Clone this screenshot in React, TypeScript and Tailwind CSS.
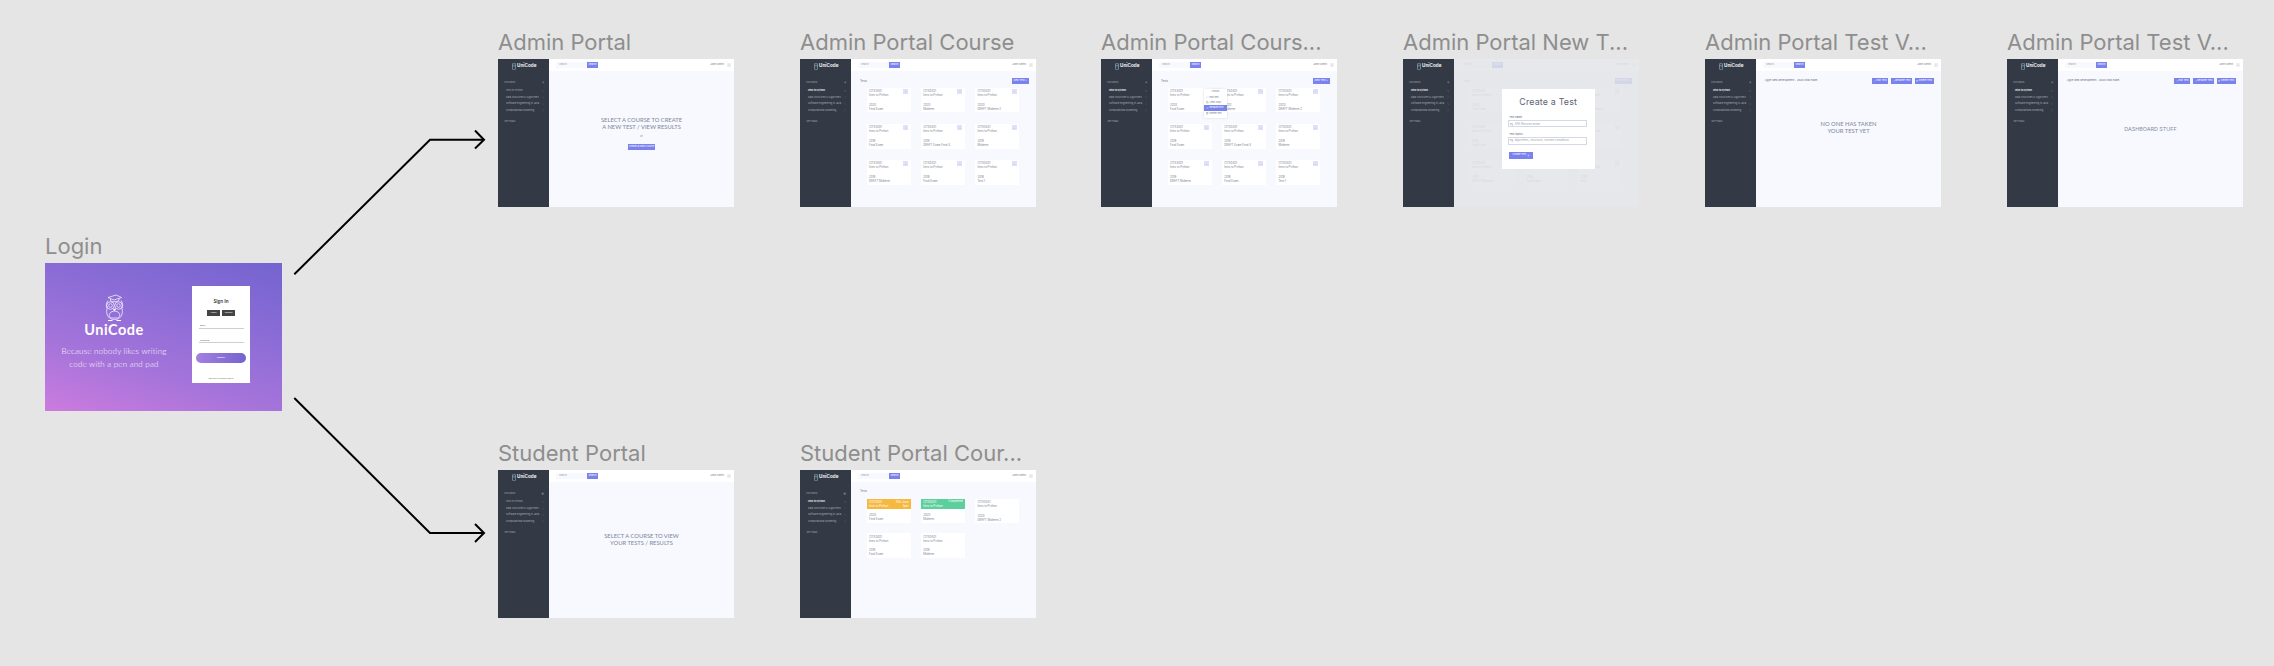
import type { ReactNode } from "react";
import { ChevronRight, Plus, Menu, Check, Copy, Pencil, Trash2 } from "lucide-react";

const courses = [
  "Intro to Python",
  "Data Structures & Algorithms",
  "Software Engineering in Java",
  "Computational Modelling",
];

const tests = [
  ["2020", "Final Exam"],
  ["2020", "Midterm"],
  ["2020", "DRAFT Midterm 2"],
  ["2019", "Final Exam"],
  ["2019", "DRAFT Exam Final 4"],
  ["2019", "Midterm"],
  ["2019", "DRAFT Midterm"],
  ["2018", "Final Exam"],
  ["2018", "Test 1"],
];

function Board({ label, pos, children }: { label: string; pos: string; children: ReactNode }) {
  return (
    <section className={`absolute ${pos}`}>
      <h2 className="h-[29px] whitespace-nowrap text-[22px] leading-[24px] font-normal text-[#8e8e8e]">
        {label}
      </h2>
      {children}
    </section>
  );
}

function LogoMark() {
  return (
    <svg viewBox="0 0 8 14" className="h-[7px] w-[4px]" fill="none" stroke="#a6cbd8" strokeWidth="1">
      <rect x="1" y="0.7" width="6" height="12.6" rx="1.5" />
      <path d="M1 4.5h6M3 7.5h2" />
    </svg>
  );
}

function Sidebar({ active, bigPlus }: { active?: number; bigPlus?: boolean }) {
  return (
    <aside className="flex h-full w-[51px] shrink-0 flex-col bg-[#343a45]">
      <div className="flex h-[14px] items-center justify-center gap-[1.5px] pl-[1px]">
        <LogoMark />
        <span className="text-[4.6px] leading-none font-bold text-[#eef0f3]">UniCode</span>
      </div>
      <div className="mt-[7.5px] flex h-[4px] items-center justify-between pr-[4.5px] pl-[6.3px] text-[2.2px] tracking-[0.1px] text-[#a9aeb8]">
        <span>COURSES</span>
        <Plus size={bigPlus ? 3.5 : 2.5} strokeWidth={3} />
      </div>
      <ul className="mt-[3px] flex flex-col">
        {courses.map((c, i) => (
          <li
            key={c}
            className={`flex h-[6.55px] items-center justify-between pr-[4.5px] pl-[8px] text-[2.4px] whitespace-nowrap ${
              active === i ? "font-semibold text-white" : "text-[#a4a9b3]"
            }`}
          >
            <span>{c}</span>
            <ChevronRight size={2.5} strokeWidth={2} />
          </li>
        ))}
      </ul>
      <div className="mt-[6.5px] pl-[6.5px] text-[2.2px] text-[#a9aeb8]">SETTINGS</div>
    </aside>
  );
}

function TopBar() {
  return (
    <header className="flex h-[12px] shrink-0 items-center bg-white pr-[3px] pl-[7px]">
      <div className="flex h-[6px] w-[31px] items-center rounded-l-[1px] bg-[#f8f9fe] pl-[3px] text-[2.4px] text-[#9a9fae]">
        Search...
      </div>
      <div className="flex h-[6px] w-[11px] items-center justify-center bg-[#7a82ee] text-[2.4px] text-white">
        Search
      </div>
      <div className="ml-auto flex items-center gap-[3px] text-[2.6px] text-[#6f7585]">
        <span>John Smith</span>
        <Menu size={4} strokeWidth={1.2} />
      </div>
    </header>
  );
}

function Shell({
  active,
  bigPlus,
  children,
}: {
  active?: number;
  bigPlus?: boolean;
  children: ReactNode;
}) {
  return (
    <div className="flex h-[148px] w-[236px] overflow-hidden bg-[#f8f9fe] font-['Inter',sans-serif]">
      <Sidebar active={active} bigPlus={bigPlus} />
      <div className="relative flex min-w-0 flex-1 flex-col">
        <TopBar />
        {children}
      </div>
    </div>
  );
}

function SmallButton({ children, className = "" }: { children: ReactNode; className?: string }) {
  return (
    <span
      className={`flex h-[5.4px] items-center justify-center gap-[0.7px] bg-[#7a82ee] text-[2.5px] whitespace-nowrap text-white ${className}`}
    >
      {children}
    </span>
  );
}

function BigMessage({ lines, offset }: { lines: string[]; offset: string }) {
  return (
    <div
      className={`flex flex-col items-center font-['Lato',sans-serif] text-[5.8px] leading-[7.2px] font-medium text-[#838da3] ${offset}`}
    >
      {lines.map((l) => (
        <span key={l} className="whitespace-nowrap">
          {l}
        </span>
      ))}
    </div>
  );
}

function TestCard({
  year,
  name,
  menuOpen,
  plain,
}: {
  year: string;
  name: string;
  menuOpen?: boolean;
  plain?: boolean;
}) {
  return (
    <div className="relative h-[24.7px] bg-white pt-[1.3px] pr-[2.3px] pl-[2px] text-[2.8px] leading-[4px] text-[#7b8091]">
      <div className="flex items-start justify-between">
        <div>
          <div>CITS3401</div>
          <div>Intro to Python</div>
        </div>
        {!plain && (
          <span
            className={`flex h-[4.7px] w-[5px] items-center justify-center text-[2px] ${
              menuOpen ? "bg-[#6a72ea] text-white" : "bg-[#dfe1fb] text-[#7a82ee]"
            }`}
          >
            +
          </span>
        )}
      </div>
      <div className="mt-[5.7px]">{year}</div>
      <div>{name}</div>
      {menuOpen && <CardMenu />}
    </div>
  );
}

function CardMenu() {
  return (
    <div className="absolute top-[1.3px] left-[36px] z-10 flex w-[22.7px] flex-col bg-white pt-[0.5px] pb-[1.5px] text-[2.4px] leading-[5px] text-[#6f7585] shadow-[0_0_2px_rgba(90,100,140,0.25)]">
      <div className="h-[5px] pl-[7.5px]">Unlock</div>
      <div className="flex h-[5.4px] items-center gap-[1px] pl-[2px]">
        <Check size={2.5} /> Edit test
      </div>
      <div className="flex h-[5px] items-center gap-[1px] pl-[2px]">
        <Copy size={2.5} /> View copy
      </div>
      <div className="flex h-[6px] items-center gap-[1px] bg-[#7a82ee] pl-[2px] text-white">
        <Pencil size={2.5} /> Rename test
      </div>
      <div className="flex h-[5.6px] items-center gap-[1px] pl-[2px]">
        <Trash2 size={2.5} /> Delete test
      </div>
    </div>
  );
}

function TestGrid({ openFirst }: { openFirst?: boolean }) {
  return (
    <div className="mt-[4px] grid grid-cols-3 gap-x-[10.7px] gap-y-[11.5px] pr-[17px] pl-[16px]">
      {tests.map(([y, n], i) => (
        <TestCard key={i} year={y} name={n} menuOpen={openFirst && i === 0} />
      ))}
    </div>
  );
}

function CourseBody({ openFirst }: { openFirst?: boolean }) {
  return (
    <>
      <div className="flex items-center justify-between pt-[7.3px] pr-[7.5px] pl-[9px]">
        <span className="text-[2.8px] text-[#6f7585]">Tests</span>
        <SmallButton className="w-[16.5px]">New Test +</SmallButton>
      </div>
      <TestGrid openFirst={openFirst} />
    </>
  );
}

function TestActions() {
  return (
    <div className="flex items-center justify-between pt-[7.3px] pr-[7.5px] pl-[9px]">
      <span className="text-[2.6px] whitespace-nowrap text-[#5f6575]">
        Agile Web Development - 2020 Final Exam
      </span>
      <div className="flex gap-[2.8px]">
        <SmallButton className="w-[16px]">
          <Pencil size={2} /> Edit Test
        </SmallButton>
        <SmallButton className="w-[21px]">
          <Pencil size={2} /> Rename Test
        </SmallButton>
        <SmallButton className="w-[18.7px]">
          <Trash2 size={2} /> Delete Test
        </SmallButton>
      </div>
    </div>
  );
}

function OwlLogo() {
  return (
    <svg viewBox="0 0 42 56" className="h-[28px] w-[21px]" fill="none" stroke="white" strokeWidth="1.4">
      {/* cap */}
      <path d="M8 7 L24 2 L35 7 L20 12 Z" />
      <path d="M13 10 V14 C18 16 26 16 30 13 V9" />
      {/* head and body */}
      <path d="M8 13 C4 18 4 24 6 29 C4 37 6 44 11 48 C17 52 25 52 31 48 C36 44 38 37 36 29 C38 24 38 18 34 13" />
      <circle cx="13" cy="23" r="7.5" />
      <circle cx="13" cy="23" r="3.6" />
      <circle cx="29" cy="23" r="7.5" />
      <circle cx="29" cy="23" r="3.6" />
      <path d="M19 30 L21 34 L23 30 Z" fill="white" />
      <path d="M12 38 C16 33 26 33 30 38 C33 42 31 47 27 48 H15 C11 47 9 42 12 38 Z" />
      <path d="M8 53 H17 M25 53 H34" strokeWidth="2.2" />
    </svg>
  );
}

function LoginFrame() {
  return (
    <div className="flex h-[148px] w-[237px] bg-[linear-gradient(197deg,#7464cf_0%,#8b6cd6_35%,#a574da_68%,#cc7bdf_100%)] font-['Lato',sans-serif]">
      <div className="flex w-[138px] flex-col items-center pt-[31px] text-white">
        <OwlLogo />
        <div className="mt-[-1px] text-[14.5px] leading-[17px] font-bold tracking-[0.5px]">UniCode</div>
        <p className="mt-[6.5px] text-center text-[8px] leading-[13.3px] font-light tracking-[0.2px] whitespace-nowrap text-white/90">
          Because nobody likes writing
          <br />
          code with a pen and pad
        </p>
      </div>
      <div className="mt-[23px] ml-[9px] flex h-[97px] w-[58px] flex-col items-center bg-white text-[#555]">
        <div className="mt-[12px] text-[5px] leading-[6px] font-bold text-[#3d3d3d]">Sign In</div>
        <div className="mt-[6px] flex gap-[1.7px]">
          <span className="flex h-[5.7px] w-[13.5px] items-center justify-center bg-[#444] text-[2.2px] text-white">
            Admin
          </span>
          <span className="flex h-[5.7px] w-[13.5px] items-center justify-center bg-[#444] text-[2.2px] text-white">
            Student
          </span>
        </div>
        <div className="mt-[8.6px] w-[45px] border-b-[0.7px] border-[#cfcfcf] pb-[0.6px] pl-[1.6px] text-[2.2px] leading-[3px]">
          Email
        </div>
        <div className="mt-[9.7px] w-[45px] border-b-[0.7px] border-[#cfcfcf] pb-[0.6px] pl-[1.6px] text-[2.2px] leading-[3px]">
          Password
        </div>
        <div className="mt-[10px] flex h-[9.4px] w-[50px] items-center justify-center rounded-full bg-gradient-to-r from-[#a47fe0] to-[#7464cf] text-[2.6px] font-bold text-white">
          LOGIN
        </div>
        <div className="mt-[14px] text-[1.8px] whitespace-nowrap text-[#666]">
          Don't have an account? Sign up
        </div>
      </div>
    </div>
  );
}

function Arrows() {
  return (
    <svg className="absolute top-0 left-0 h-[666px] w-[2274px]" fill="none" stroke="black" strokeWidth="2">
      <path d="M294.3 274.3 L430 139.7 H484" />
      <path d="M475 130.5 L484 139.7 L475 148.5" />
      <path d="M294.3 398 L430 533 H484" />
      <path d="M475 524 L484 533 L475 542" />
    </svg>
  );
}

export default function App() {
  return (
    <div className="relative h-[666px] w-[2274px] overflow-hidden bg-[#e5e5e5] font-['Inter',sans-serif]">
      <Arrows />

      <Board label="Login" pos="left-[45px] top-[234px]">
        <LoginFrame />
      </Board>

      <Board label="Admin Portal" pos="left-[498px] top-[30px]">
        <Shell>
          <BigMessage lines={["SELECT A COURSE TO CREATE", "A NEW TEST / VIEW RESULTS"]} offset="mt-[45px]" />
          <div className="mt-[5px] text-center text-[2.6px] text-[#7b8091]">or</div>
          <SmallButton className="mx-auto mt-[5px] w-[27px]">Create a New Course</SmallButton>
        </Shell>
      </Board>

      <Board label="Admin Portal Course" pos="left-[800px] top-[30px]">
        <Shell active={0}>
          <CourseBody />
        </Shell>
      </Board>

      <Board label="Admin Portal Cours..." pos="left-[1101px] top-[30px]">
        <Shell active={0}>
          <CourseBody openFirst />
        </Shell>
      </Board>

      <Board label="Admin Portal New T..." pos="left-[1403px] top-[30px]">
        <Shell active={0}>
          <CourseBody />
          <div className="absolute inset-0 z-10 flex justify-center bg-[#e3e4e7]/85 pt-[30px] pl-[3.4px]">
            <div className="flex h-[80px] w-[93px] flex-col bg-white px-[7.5px] text-[2.8px] text-[#6f7585]">
              <div className="mt-[7.5px] text-center text-[8.8px] leading-[9px] tracking-[0.2px] text-[#5a6272]">
                Create a Test
              </div>
              <label className="mt-[10.5px] text-[2.6px] leading-[3px] font-medium">Test name</label>
              <div className="mt-[1px] ml-[-1.5px] flex h-[7.4px] items-center border-[0.5px] border-[#d5d8e6] bg-white pl-[1px] text-[#9a9fae]">
                eg. SAS Revision exam
              </div>
              <label className="mt-[5.7px] text-[2.6px] leading-[3px] font-medium">Test topics</label>
              <div className="mt-[0.5px] ml-[-1.5px] flex h-[8px] items-center overflow-hidden border-[0.5px] border-[#d5d8e6] bg-white pl-[1px] whitespace-nowrap text-[#9a9fae]">
                eg. algorithms, recursion, runtime complexity
              </div>
              <SmallButton className="mt-[7.3px] !h-[6.7px] w-[24px]">
                Create Test <Plus size={3} strokeWidth={2} />
              </SmallButton>
            </div>
          </div>
        </Shell>
      </Board>

      <Board label="Admin Portal Test V..." pos="left-[1705px] top-[30px]">
        <Shell active={0}>
          <TestActions />
          <BigMessage lines={["NO ONE HAS TAKEN", "YOUR TEST YET"]} offset="mt-[36px]" />
        </Shell>
      </Board>

      <Board label="Admin Portal Test V..." pos="left-[2007px] top-[30px]">
        <Shell active={0}>
          <TestActions />
          <div className="mt-[42px] text-center text-[5.4px] leading-[7px] text-[#838da3]">DASHBOARD STUFF</div>
        </Shell>
      </Board>

      <Board label="Student Portal" pos="left-[498px] top-[441px]">
        <Shell bigPlus>
          <BigMessage lines={["SELECT A COURSE TO VIEW", "YOUR TESTS / RESULTS"]} offset="mt-[50px]" />
        </Shell>
      </Board>

      <Board label="Student Portal Cour..." pos="left-[800px] top-[441px]">
        <Shell active={0} bigPlus>
          <div className="pt-[7.3px] pl-[9px]">
            <span className="block h-[5.4px] text-[2.8px] text-[#6f7585]">Tests</span>
          </div>
          <div className="mt-[4px] grid grid-cols-3 gap-x-[10.7px] gap-y-[10px] pr-[17px] pl-[16px] text-[2.8px] leading-[4px] text-[#7b8091]">
            <div className="h-[24.4px] bg-white">
              <div className="flex h-[10.7px] items-center justify-between bg-[#f6b83f] px-[2px] text-white">
                <div>
                  <div>CITS3401</div>
                  <div>Intro to Python</div>
                </div>
                <div className="text-right">
                  <div>15th June</div>
                  <div>5pm</div>
                </div>
              </div>
              <div className="pt-[3.5px] pl-[2px]">
                <div>2020</div>
                <div>Final Exam</div>
              </div>
            </div>
            <div className="h-[24.4px] bg-white">
              <div className="flex h-[10.7px] items-center justify-between bg-[#5ccf9c] px-[2px] text-white">
                <div>
                  <div>CITS3401</div>
                  <div>Intro to Python</div>
                </div>
                <div className="self-start pt-[0.5px]">Completed</div>
              </div>
              <div className="pt-[3.5px] pl-[2px]">
                <div>2020</div>
                <div>Midterm</div>
              </div>
            </div>
            <TestCard year="2020" name="DRAFT Midterm 2" plain />
            <TestCard year="2019" name="Final Exam" plain />
            <TestCard year="2019" name="Midterm" plain />
          </div>
        </Shell>
      </Board>
    </div>
  );
}
